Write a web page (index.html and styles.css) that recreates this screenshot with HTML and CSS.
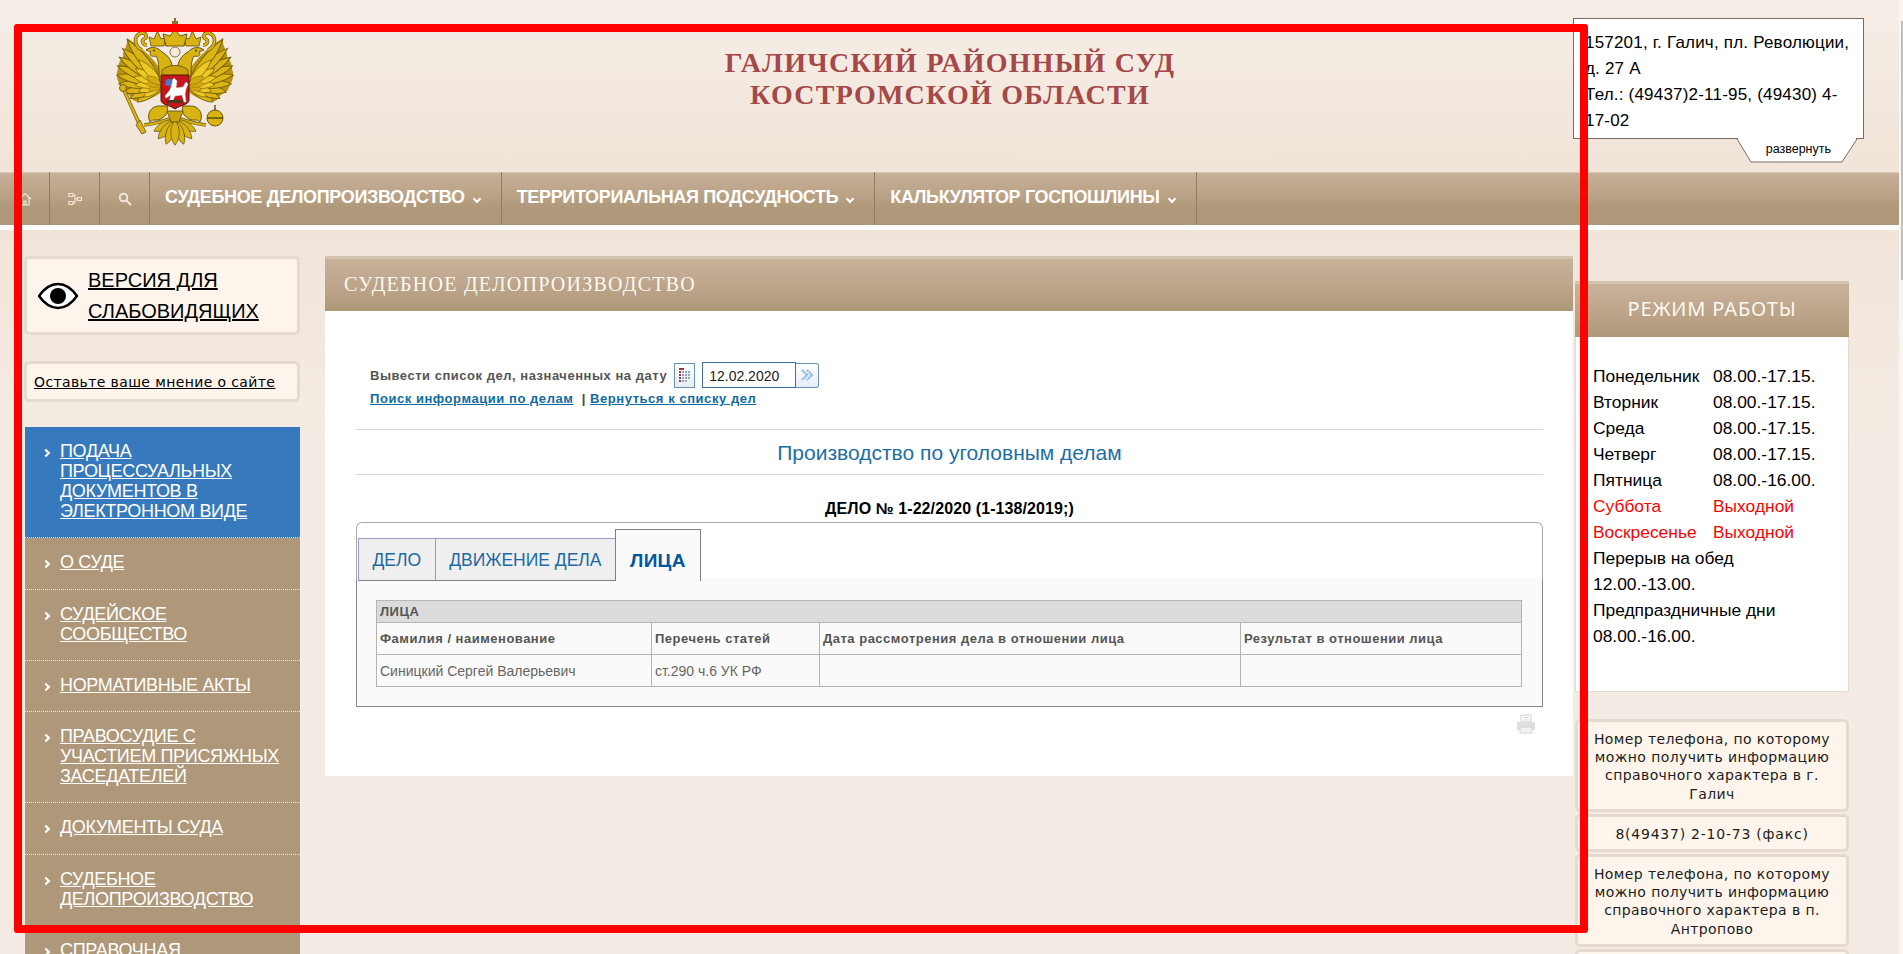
FILE: index.html
```html
<!DOCTYPE html>
<html lang="ru">
<head>
  <meta charset="UTF-8">
  <title>Галичский районный суд Костромской области</title>
  <link rel="stylesheet" href="styles.css">
</head>
<body>
<div class="page">

  <div class="top">
    <svg class="emblem" viewBox="0 0 150 160" width="150" height="160">
      <defs>
        <path id="fth" d="M0 0 C-4 -8 -4 -20 0 -28 C4 -20 4 -8 0 0Z"/>
        <g id="half">
          <!-- wing backing -->
          <path d="M62 72 C54 58 42 48 27 38 C28 48 22 50 23 58 C17 62 19 68 17 72 C16 80 20 84 22 90 C26 94 30 94 33 100 C40 104 50 100 62 92Z" fill="#b8930c"/>
          <!-- wing, outer row -->
          <g fill="#dcb514" stroke="#6e5a10" stroke-width=".6">
            <use href="#fth" transform="translate(62 84) rotate(-126) scale(1.500 1.100)"/>
            <use href="#fth" transform="translate(62 84) rotate(-114) scale(1.500 1.250)"/>
            <use href="#fth" transform="translate(62 84) rotate(-102) scale(1.500 1.400)"/>
            <use href="#fth" transform="translate(62 84) rotate(-90) scale(1.500 1.550)"/>
            <use href="#fth" transform="translate(62 84) rotate(-79) scale(1.500 1.650)"/>
            <use href="#fth" transform="translate(62 84) rotate(-68) scale(1.500 1.720)"/>
            <use href="#fth" transform="translate(62 84) rotate(-58) scale(1.500 1.800)"/>
            <use href="#fth" transform="translate(62 84) rotate(-48) scale(1.500 1.900)"/>
            <use href="#fth" transform="translate(62 84) rotate(-38) scale(1.500 2.020)"/>
          </g>
          <!-- wing, inner rows -->
          <g fill="#ecc823" stroke="#77600c" stroke-width=".6">
            <use href="#fth" transform="translate(62 84) rotate(-125) scale(1.300 .800)"/>
            <use href="#fth" transform="translate(62 84) rotate(-108) scale(1.300 .880)"/>
            <use href="#fth" transform="translate(62 84) rotate(-92) scale(1.300 .960)"/>
            <use href="#fth" transform="translate(62 84) rotate(-76) scale(1.300 1.040)"/>
            <use href="#fth" transform="translate(62 84) rotate(-60) scale(1.300 1.100)"/>
            <use href="#fth" transform="translate(62 84) rotate(-44) scale(1.300 1.200)"/>
          </g>
          <g fill="#d2a90f" stroke="#77600c" stroke-width=".5">
            <use href="#fth" transform="translate(62 84) rotate(-115) scale(1.100 .520)"/>
            <use href="#fth" transform="translate(62 84) rotate(-90) scale(1.100 .560)"/>
            <use href="#fth" transform="translate(62 84) rotate(-65) scale(1.100 .620)"/>
          </g>
          <!-- neck and head -->
          <path d="M73 76 C74 62 68 55 62 52 C58 47 51 46 46 50 L51 52 C48 56 53 57 56 56 C60 62 58 72 60 82Z" fill="#d9b312" stroke="#5c4c0c" stroke-width=".9"/>
          <circle cx="54" cy="50.500" r=".9" fill="#3a2e06"/>
          <!-- small crown and ribbon -->
          <path d="M51 46 L64 46 L66 37 L61 39 L57.500 31 L54 39 L49 37Z" fill="#d9b312" stroke="#5c4c0c" stroke-width=".8"/>
          <path d="M42 50 C34 46 33 36 41 33 C46 32 48 37 44 39 C41 41 43 45 47 45" fill="none" stroke="#6e5a10" stroke-width="3.600"/>
          <path d="M42 50 C34 46 33 36 41 33 C46 32 48 37 44 39 C41 41 43 45 47 45" fill="none" stroke="#d9b312" stroke-width="2.200"/>
          <path d="M66 46 C67 40 71 39 75 39" fill="none" stroke="#b8930c" stroke-width="3"/>
          <!-- leg and foot -->
          <path d="M61 106 C51 105 46 114 50 122 C53 118 58 122 62 118 C66 116 69 112 67 106Z" fill="#d9b312" stroke="#5c4c0c" stroke-width=".9"/>
          <path d="M70 119 C62 121 56 124 44 125" fill="none" stroke="#6e5a10" stroke-width="3.400"/>
          <path d="M70 119 C62 121 56 124 44 125" fill="none" stroke="#d9b312" stroke-width="2"/>
          <!-- tail -->
          <g fill="#d9b312" stroke="#5c4c0c" stroke-width=".6">
            <use href="#fth" transform="translate(75 120) rotate(-118) scale(1.300 .850)"/>
            <use href="#fth" transform="translate(75 120) rotate(-138) scale(1.400 .900)"/>
            <use href="#fth" transform="translate(75 120) rotate(-160) scale(1.400 .920)"/>
          </g>
        </g>
      </defs>
      <use href="#half"/>
      <use href="#half" transform="translate(150 0) scale(-1 1)"/>
      <path d="M74 18 h2 v3 h2 v3 h-2 v6 h-2 v-6 h-2 v-3 h2z" fill="#8a7430"/>
      <path d="M66 46 L84 46 L87 34 L80 36 L75 29 L70 36 L63 34Z" fill="#d9b312" stroke="#5c4c0c" stroke-width=".9"/>
      <circle cx="75" cy="52" r="5" fill="#f3e9df" stroke="#8a7430" stroke-width="1"/>
      <path d="M62 70 C68 64 82 64 88 70 L88 78 L62 78Z" fill="#c9a20e" stroke="#5c4c0c" stroke-width=".8"/>
      <use href="#fth" fill="#d9b312" stroke="#5c4c0c" stroke-width=".6" transform="translate(75 120) rotate(180) scale(1.400 .900)"/>
      <path d="M61 75 H89 V100 C89 105 80 105 75 109 C70 105 61 105 61 100Z" fill="#c4161c" stroke="#4e1a0e" stroke-width="1"/>
      <path d="M66 80 a5 5 0 0 1 8 2 l-2 3 a6 4 0 0 1 -7 0z" fill="#4a78c4"/>
      <path d="M74 78 l3 3 l-1 7 l7 -1 l3 -5 l2 2 l-2 5 l-1 5 l1 8 l-2 0 l-2 -7 l-7 1 l-3 6 l-3 0 l2 -7 l-5 3 l-1 -2 l5 -6 l2 -6 l1 -5 z" fill="#fff" stroke="#d8d8d8" stroke-width=".5"/>
      <path d="M67 100 h16 v3 h-16z" fill="#4a3a18"/>
      <path d="M67 111 L83 111 L79 122 L71 122Z" fill="#c9a20e" stroke="#5c4c0c" stroke-width=".8"/>
      <path d="M23 88 L42 130" stroke="#6e5a10" stroke-width="3.600"/>
      <path d="M23 88 L42 130" stroke="#d9b312" stroke-width="2.200"/>
      <path d="M40 120 l6 12 l-4 2 l-6 -9z" fill="#d9b312" stroke="#5c4c0c" stroke-width=".8"/>
      <circle cx="23" cy="88" r="3.500" fill="#d9b312" stroke="#5c4c0c" stroke-width=".8"/>
      <circle cx="115" cy="118" r="8" fill="#d9b312" stroke="#5c4c0c" stroke-width=".9"/>
      <path d="M107 118 H123 M115 105 V110" stroke="#5c4c0c" stroke-width="1.400"/>
    </svg>
    <div class="court-name">ГАЛИЧСКИЙ РАЙОННЫЙ СУД<br>КОСТРОМСКОЙ ОБЛАСТИ</div>
    <div class="address">
      157201, г. Галич, пл. Революции, д. 27 А<br>
      Тел.: (49437)2-11-95, (49430) 4-17-02
      <svg class="address-tab" viewBox="0 0 120 24" width="120" height="24">
        <path d="M0 0 L14 23 H105 L120 0" fill="#fff" stroke="#7d6a64"/>
        <path d="M1 -1 H119" stroke="#fff" stroke-width="3"/>
      </svg>
      <span class="address-more">развернуть</span>
    </div>
  </div>

  <div class="nav">
    <a class="nav-icon">
      <svg viewBox="0 0 14 14" width="14" height="14" fill="none" stroke="#efe6d8" stroke-width="1.200"><path d="M1 7 L7 1.500 L13 7 M3 6 V13 H11 V6 M6 13 V9 H8 V13"/></svg>
    </a>
    <a class="nav-icon">
      <svg viewBox="0 0 14 14" width="14" height="14" fill="none" stroke="#efe6d8" stroke-width="1.200"><path d="M1 1.500 h4 v3 h-4z M1 9.500 h4 v3 h-4z M9.500 5.500 h4 v3 h-4z M5 3 H7 V11 H5 M7 7 H9.500"/></svg>
    </a>
    <a class="nav-icon">
      <svg viewBox="0 0 14 14" width="14" height="14" fill="none" stroke="#efe6d8" stroke-width="2"><circle cx="5.500" cy="5.500" r="3.800"/><path d="M8.500 8.500 L13 13"/></svg>
    </a>
    <a class="nav-link">СУДЕБНОЕ ДЕЛОПРОИЗВОДСТВО<i></i></a>
    <a class="nav-link">ТЕРРИТОРИАЛЬНАЯ ПОДСУДНОСТЬ<i></i></a>
    <a class="nav-link">КАЛЬКУЛЯТОР ГОСПОШЛИНЫ<i></i></a>
  </div>

  <div class="content">

    <div class="left">
      <div class="box eye-box">
        <svg viewBox="0 0 40 28" width="40" height="28">
          <path d="M1 14 C8 4 14 2 20 2 C26 2 32 4 39 14 C32 24 26 26 20 26 C14 26 8 24 1 14Z" fill="#fff" stroke="#000" stroke-width="2.600"/>
          <circle cx="20" cy="14" r="8" fill="#000"/>
        </svg>
        <a>ВЕРСИЯ ДЛЯ СЛАБОВИДЯЩИХ</a>
      </div>
      <div class="box opinion-box"><a>Оставьте ваше мнение о сайте</a></div>
      <ul class="side-menu">
        <li class="current"><a>ПОДАЧА ПРОЦЕССУАЛЬНЫХ ДОКУМЕНТОВ В ЭЛЕКТРОННОМ ВИДЕ</a></li>
        <li><a>О СУДЕ</a></li>
        <li><a>СУДЕЙСКОЕ СООБЩЕСТВО</a></li>
        <li><a>НОРМАТИВНЫЕ АКТЫ</a></li>
        <li><a>ПРАВОСУДИЕ С УЧАСТИЕМ ПРИСЯЖНЫХ ЗАСЕДАТЕЛЕЙ</a></li>
        <li><a>ДОКУМЕНТЫ СУДА</a></li>
        <li><a>СУДЕБНОЕ ДЕЛОПРОИЗВОДСТВО</a></li>
        <li><a>СПРАВОЧНАЯ</a></li>
      </ul>
    </div>

    <div class="main">
      <div class="band main-title">СУДЕБНОЕ ДЕЛОПРОИЗВОДСТВО</div>
      <div class="main-body">
        <div class="filter">
          <span>Вывести список дел, назначенных на дату</span>
          <span class="cal-btn">
            <svg viewBox="0 0 14 16" width="14" height="16">
              <path d="M1 1 H6 V3 H1Z" fill="#a33"/>
              <g fill="#a33"><rect x="1" y="4" width="2" height="2"/><rect x="1" y="7" width="2" height="2"/><rect x="1" y="10" width="2" height="2"/><rect x="1" y="13" width="2" height="2"/></g>
              <g fill="#8fa9c4"><rect x="4" y="4" width="2" height="2"/><rect x="7" y="4" width="2" height="2"/><rect x="10" y="4" width="2" height="2"/><rect x="4" y="7" width="2" height="2"/><rect x="7" y="7" width="2" height="2"/><rect x="10" y="7" width="2" height="2"/><rect x="4" y="10" width="2" height="2"/><rect x="7" y="10" width="2" height="2"/><rect x="10" y="10" width="2" height="2"/><rect x="4" y="13" width="2" height="2"/><rect x="7" y="13" width="2" height="2"/></g>
            </svg>
          </span>
          <span class="date-input">12.02.2020</span>
          <span class="go-btn">
            <svg viewBox="0 0 14 14" width="14" height="14" fill="none" stroke="#8fbbe2" stroke-width="2.400" stroke-dasharray="2 .6"><path d="M2 2 L7 7 L2 12"/><path d="M7 2 L12 7 L7 12"/></svg>
          </span>
        </div>
        <div class="search-links"><a>Поиск информации по делам</a>&nbsp;&nbsp;|&nbsp;<a>Вернуться к списку дел</a></div>
        <div class="section-title">Производство по уголовным делам</div>
        <div class="case-no">ДЕЛО № 1-22/2020 (1-138/2019;)</div>

        <div class="tabs-wrap">
          <div class="tabs">
            <a class="tab">ДЕЛО</a>
            <a class="tab">ДВИЖЕНИЕ ДЕЛА</a>
            <a class="tab tab-active">ЛИЦА</a>
          </div>
          <div class="tab-panel">
            <table class="persons">
              <colgroup><col class="c1"><col class="c2"><col class="c3"><col class="c4"></colgroup>
              <tr><th colspan="4" class="cap">ЛИЦА</th></tr>
              <tr><th>Фамилия / наименование</th><th>Перечень статей</th><th>Дата рассмотрения дела в отношении лица</th><th>Результат в отношении лица</th></tr>
              <tr><td>Синицкий Сергей Валерьевич</td><td>ст.290 ч.6 УК РФ</td><td></td><td></td></tr>
            </table>
          </div>
        </div>

        <div class="print-row">
          <svg viewBox="0 0 20 20" width="20" height="20">
            <path d="M5 1 H15 V8 H5Z" fill="#fff" stroke="#cfcfcf"/>
            <path d="M7 3.500 H13 M7 6 H13" stroke="#d8d8d8"/>
            <path d="M1 8 H19 V16 H1Z" fill="#dfdfdf"/>
            <path d="M4 13 H16 V19 H4Z" fill="#f2f2f2" stroke="#d2d2d2"/>
          </svg>
        </div>
      </div>
    </div>

    <div class="right">
      <div class="band work-title">РЕЖИМ РАБОТЫ</div>
      <div class="work-body">
        <table class="hours">
          <tr><td class="day">Понедельник</td><td>08.00.-17.15.</td></tr>
          <tr><td>Вторник</td><td>08.00.-17.15.</td></tr>
          <tr><td>Среда</td><td>08.00.-17.15.</td></tr>
          <tr><td>Четверг</td><td>08.00.-17.15.</td></tr>
          <tr><td>Пятница</td><td>08.00.-16.00.</td></tr>
          <tr class="off"><td>Суббота</td><td>Выходной</td></tr>
          <tr class="off"><td>Воскресенье</td><td>Выходной</td></tr>
          <tr><td colspan="2">Перерыв на обед</td></tr>
          <tr><td colspan="2">12.00.-13.00.</td></tr>
          <tr><td colspan="2">Предпраздничные дни</td></tr>
          <tr><td colspan="2">08.00.-16.00.</td></tr>
        </table>
      </div>
      <div class="box phone first">Номер телефона, по которому можно получить информацию справочного характера в г. Галич</div>
      <div class="box phone fax">8(49437) 2-10-73 (факс)</div>
      <div class="box phone">Номер телефона, по которому можно получить информацию справочного характера в п. Антропово</div>
      <div class="box phone"></div>
    </div>

  </div>

  <div class="scrollbar"><i></i></div>
  <div class="red-frame"></div>
</div>
</body>
</html>
```

FILE: styles.css
```css
html, body { margin: 0; padding: 0; height: 954px; overflow: hidden; }
body { background: #f4ece4; font-family: "Liberation Sans", Arial, sans-serif; color: #000; }
a { color: inherit; text-decoration: underline; }

.page { position: relative; height: 954px; overflow: hidden; }

/* header */
.top { position: relative; height: 172px; background: linear-gradient(#f5eee7, #f1e4d8); }
.emblem { position: absolute; left: 100px; top: 0; }
.court-name { padding-top: 47px; margin-right: 3px; text-align: center; font-family: "Liberation Serif", serif; font-weight: bold; font-size: 28px; line-height: 31.500px; letter-spacing: 1.25px; color: #a5484a; }

.address { position: absolute; left: 1573px; top: 18px; width: 270px; height: 103px; padding: 11px 8px 5px 11px; background: #fff; border: 1px solid #7d6a64; font-size: 17px; line-height: 26px; letter-spacing: .2px; }
.address-tab { position: absolute; right: 6px; top: 120px; overflow: visible; }
.address-more { position: absolute; right: 32px; top: 120px; font-size: 12.500px; line-height: 20px; letter-spacing: 0; }

/* top menu */
.nav { display: flex; height: 53px; margin-right: 4px; border-bottom: 5px solid #fff; background: linear-gradient(#c9b39b 0, #c4ad95 10%, #b9a285 45%, #ae9879 70%, #ae9879 100%); box-shadow: inset 0 1px 0 #d9c8b4; }
.nav-icon { display: flex; align-items: center; justify-content: center; box-sizing: border-box; width: 50px; border-right: 1px solid #8f7c63; }
.nav-link { display: flex; align-items: center; padding: 0 21px 2px 15px; border-right: 1px solid #8f7c63; color: #fff; font-weight: bold; font-size: 18px; letter-spacing: -.35px; text-decoration: none; }
.nav-link i { display: block; width: 4px; height: 4px; margin: 3px 0 0 9px; border-right: 2px solid #fff; border-bottom: 2px solid #fff; transform: rotate(45deg); }

/* three columns */
.content { display: grid; grid-template-columns: 301px 1250px 274px; padding: 26px 0 0 24px; height: 700px; background: linear-gradient(#f1e5da, #f4ece4 220px); }

.box { box-sizing: border-box; border: 3px solid #e4dace; border-radius: 5px; background: #fdf5eb; }

/* left column */
.left { width: 276px; }
.eye-box { display: flex; align-items: center; height: 79px; padding-left: 11px; font-size: 20px; line-height: 31px; }
.eye-box svg { flex: none; margin-right: 10px; }
.opinion-box { height: 41px; margin-top: 26px; padding-left: 7px; font-family: "DejaVu Sans", Verdana, sans-serif; font-size: 14px; line-height: 36px; letter-spacing: .38px; }

.side-menu { margin: 25px 0 0 1px; padding: 0; list-style: none; width: 275px; }
.side-menu li { position: relative; padding: 14px 20px 16.300px 35px; border-bottom: 1px dotted #f0e8de; background: #ae9879; color: #fff; font-size: 18px; line-height: 20px; letter-spacing: -.32px; }
.side-menu li:before { content: ""; position: absolute; left: 18px; top: 23px; width: 4px; height: 4px; border-top: 2px solid #fff; border-right: 2px solid #fff; transform: rotate(45deg); }
.side-menu li.current { background: #3779bd; }

/* section bands */
.band { background: linear-gradient(#c9b39b 0, #c4ad95 25%, #b9a285 65%, #ae9879 100%); box-shadow: inset 0 3px 0 #d4c3ae; color: #fbf8f2; }
.main-title { height: 55px; padding-left: 19px; font-family: "Liberation Serif", serif; font-size: 20px; line-height: 57px; letter-spacing: 1.25px; }

/* main column */
.main { width: 1248px; }
.main-body { box-sizing: border-box; height: 465px; padding: 51px 30px 0 31px; background: #fff; }

.filter { display: flex; align-items: center; height: 26px; margin-left: 14px; color: #555; font-weight: bold; font-size: 13px; letter-spacing: .52px; }
.cal-btn, .go-btn { display: flex; align-items: center; justify-content: center; box-sizing: border-box; height: 25px; border: 1px solid #6a90b8; background: linear-gradient(#fff, #e4edf6); }
.cal-btn { width: 21px; margin-left: 7px; margin-right: 7px; }
.go-btn { width: 23px; border-left: 0; border-radius: 0 3px 3px 0; }
.date-input { box-sizing: border-box; width: 94px; height: 26px; padding-left: 6px; border: 1px solid #3c6e9e; color: #222; font-weight: normal; font-size: 14px; line-height: 26px; letter-spacing: 0; }
.search-links { margin-left: 14px; color: #444; font-weight: bold; font-size: 13px; line-height: 22px; letter-spacing: .55px; }
.search-links a { color: #0f6ba5; }
.section-title { height: 44px; margin-top: 19px; border-top: 1px solid #d6d6d6; border-bottom: 1px solid #d6d6d6; text-align: center; color: #1c6ea4; font-size: 21px; line-height: 46px; }
.case-no { margin-top: 24px; text-align: center; font-weight: bold; font-size: 16px; line-height: 20px; letter-spacing: .1px; }

.tabs-wrap { box-sizing: border-box; height: 185px; margin-top: 3px; border: 1px solid #a8a8a8; border-bottom: 0; border-radius: 6px 6px 0 0; }
.tabs { position: relative; z-index: 1; display: flex; align-items: flex-end; height: 58px; padding-left: 1px; }
.tab { display: flex; align-items: center; box-sizing: border-box; height: 43px; padding: 2px 13.500px 0; border: 1px solid #9a9ac8; border-right: 0; border-bottom: 1px solid #808080; background: #efefef; color: #1b6aa5; font-size: 17.500px; text-decoration: none; }
.tab-active { height: 52px; padding: 11px 14px 0; border: 1px solid #808080; border-bottom: 0; background: #fafafa; color: #00579f; font-weight: bold; font-size: 19px; letter-spacing: .3px; }
.tab-panel { box-sizing: border-box; height: 128px; margin: -2px -1px 0; padding: 21px 0 0 19px; border: 1px solid #888; border-top: 0; background: #fafafa; }

.persons { border-collapse: collapse; table-layout: fixed; width: 1146px; color: #666; font-size: 14px; }
.persons .c1 { width: 275px; }
.persons .c2 { width: 168px; }
.persons .c3 { width: 421px; }
.persons th, .persons td { box-sizing: border-box; height: 32px; padding: 0 3px; border: 1px solid #b4b4b4; text-align: left; }
.persons th { color: #555; font-size: 13px; letter-spacing: .5px; }
.persons th.cap { height: 22px; background: #dcdcdc; }

.print-row { display: flex; justify-content: flex-end; margin-top: 7px; padding-right: 7px; }

/* right column */
.right { width: 274px; margin-top: 25px; }
.work-title { height: 56px; text-align: center; font-family: "Noto Sans", Tahoma, sans-serif; font-size: 20px; line-height: 56px; letter-spacing: .85px; }
.work-body { box-sizing: border-box; height: 355px; padding: 26px 0 0 17px; background: #fff; border: 1px solid #e4dace; border-top: 0; }
.hours { border-collapse: collapse; font-size: 17.400px; line-height: 26px; }
.hours td { padding: 0; }
.hours .day { width: 120px; }
.hours .off td { color: #f00; }

.phone { min-height: 38px; margin-bottom: 2px; padding: 8px 3px 6px; font-family: "DejaVu Sans", Verdana, sans-serif; font-size: 14px; line-height: 18.200px; letter-spacing: .4px; text-align: center; color: #1c1c1c; }
.phone.first { margin-top: 27px; }
.phone.fax { letter-spacing: .77px; }

/* overlays */
.scrollbar { position: absolute; right: 0; top: 0; width: 4px; height: 954px; background: #f9f5f1; }
.scrollbar i { position: absolute; right: 0; top: 21px; width: 2.500px; height: 259px; background: #bfbfbf; }
.red-frame { position: absolute; left: 14px; top: 24px; width: 1558px; height: 893px; border: 8px solid #f00; border-radius: 3px; }
```
